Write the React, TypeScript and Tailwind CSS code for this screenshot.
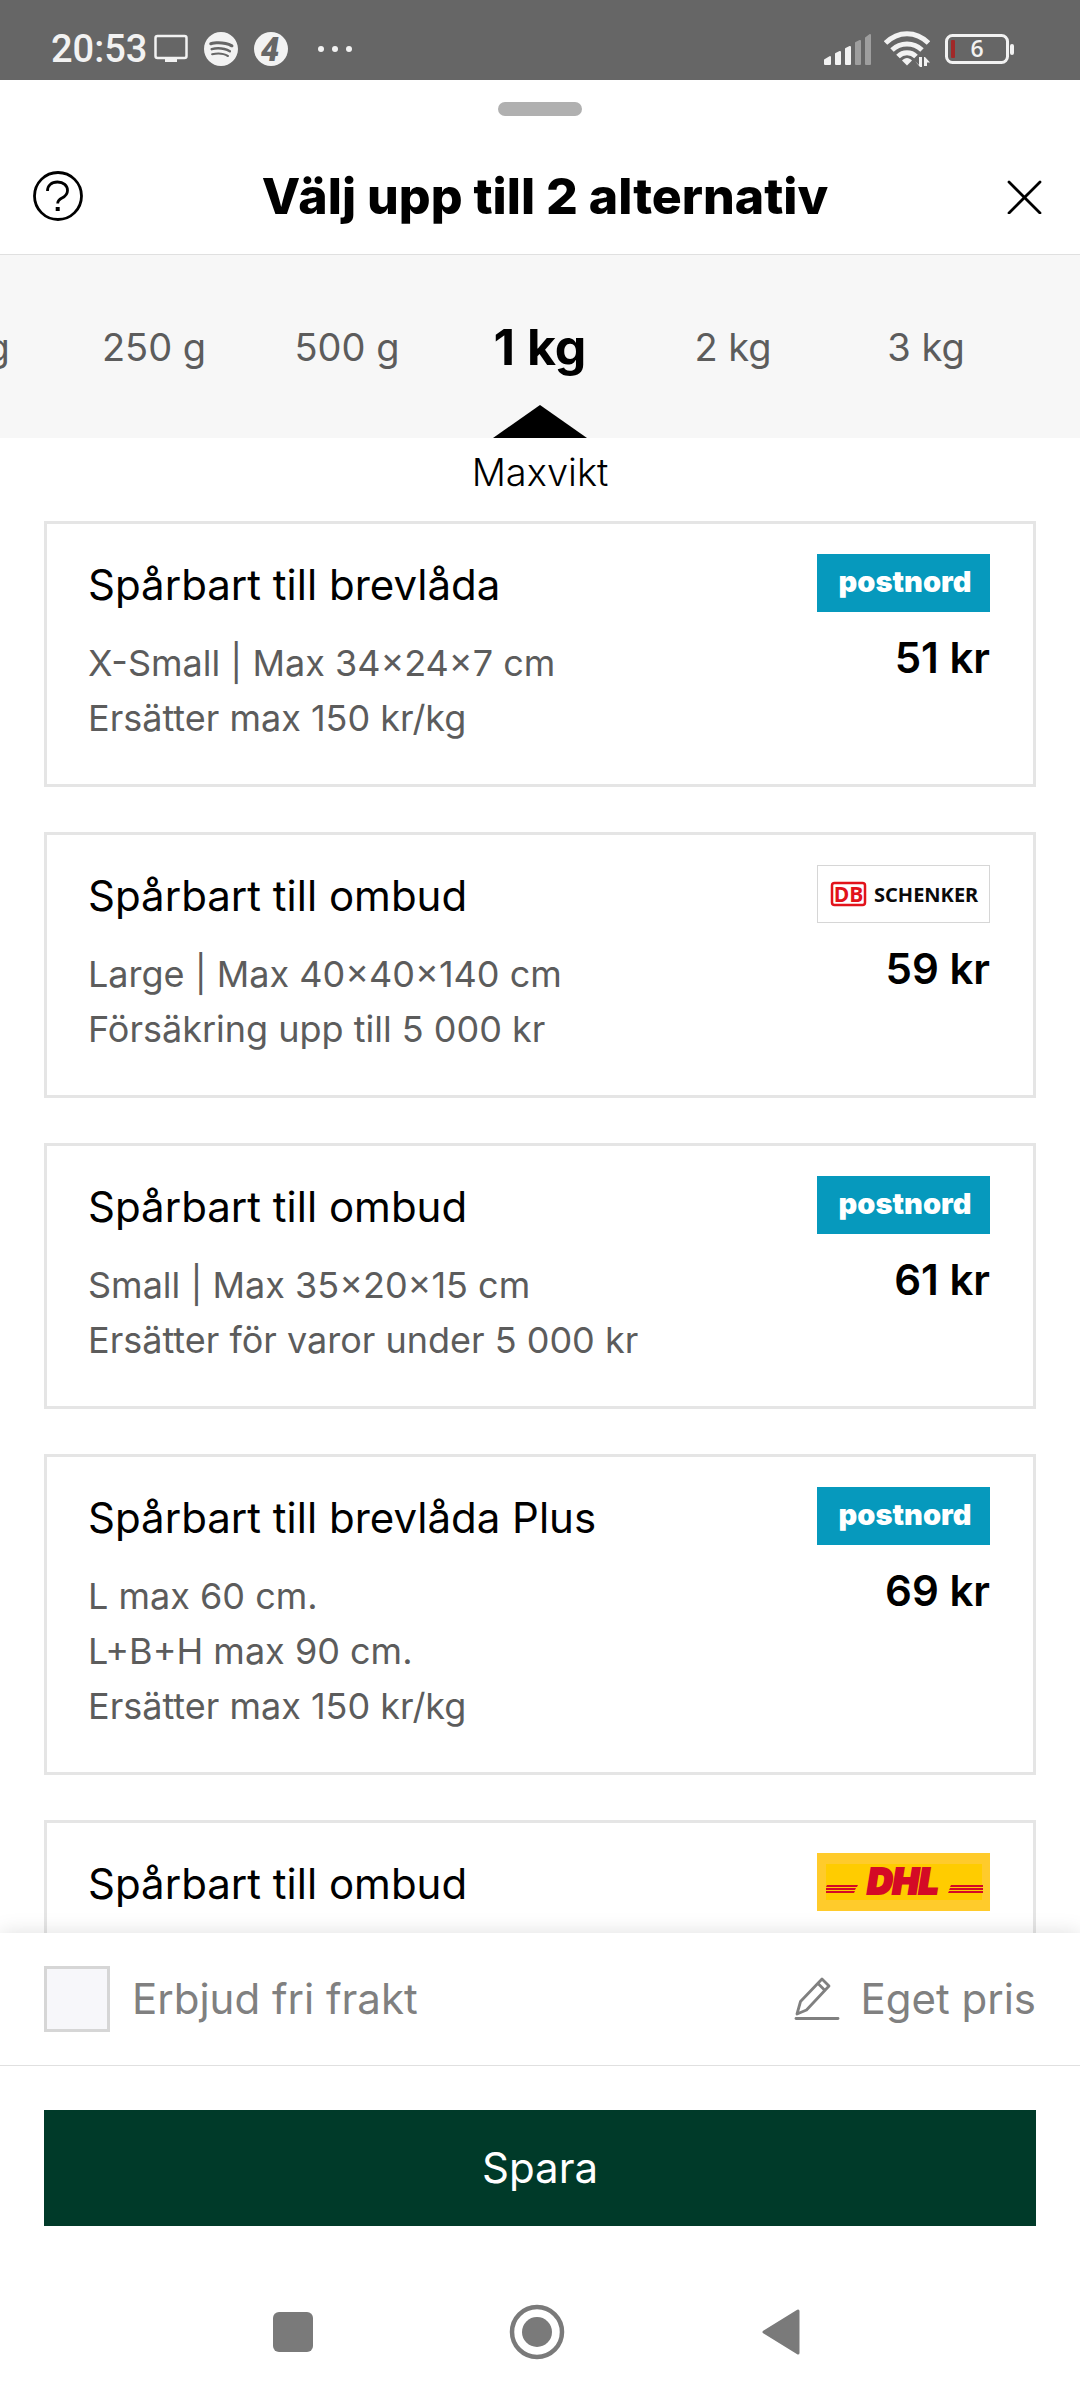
import React, { useState } from "react";
import { SiSpotify } from "react-icons/si";

type Carrier = "postnord" | "schenker" | "dhl";

interface ShippingOption {
  title: string;
  details?: string[];
  carrier: Carrier;
  price?: string;
}

const weights = ["100 g", "250 g", "500 g", "1 kg", "2 kg", "3 kg"];

const options: ShippingOption[] = [
  {
    title: "Spårbart till brevlåda",
    details: ["X-Small | Max 34×24×7 cm", "Ersätter max 150 kr/kg"],
    carrier: "postnord",
    price: "51 kr",
  },
  {
    title: "Spårbart till ombud",
    details: ["Large | Max 40×40×140 cm", "Försäkring upp till 5 000 kr"],
    carrier: "schenker",
    price: "59 kr",
  },
  {
    title: "Spårbart till ombud",
    details: ["Small | Max 35×20×15 cm", "Ersätter för varor under 5 000 kr"],
    carrier: "postnord",
    price: "61 kr",
  },
  {
    title: "Spårbart till brevlåda Plus",
    details: ["L max 60 cm.", "L+B+H max 90 cm.", "Ersätter max 150 kr/kg"],
    carrier: "postnord",
    price: "69 kr",
  },
  {
    title: "Spårbart till ombud",
    carrier: "dhl",
  },
];

const StatusBar: React.FC = () => (
  <div className="flex h-20 shrink-0 items-center justify-between bg-[#666666] pt-[18px] pr-[65px] pl-[51px] text-[#f2f2f2]">
    <div className="flex items-center">
      <span className="font-[Roboto,sans-serif] text-[38px] leading-none font-medium">
        20:53
      </span>
      <svg width="34" height="34" viewBox="0 0 34 34" className="ml-[7px]">
        <rect x="1.5" y="4" width="31" height="22" rx="2" fill="none" stroke="currentColor" strokeWidth="2.5" />
        <path d="M11 26h12v4H11z" fill="currentColor" />
      </svg>
      <SiSpotify size={34} className="ml-4" />
      <svg width="34" height="34" viewBox="0 0 34 34" className="ml-4">
        <circle cx="17" cy="17" r="17" fill="currentColor" />
        <text x="16" y="29" textAnchor="middle" fontFamily="Roboto, sans-serif" fontWeight="900" fontStyle="italic" fontSize="33" fill="#666666">
          4
        </text>
      </svg>
      <svg width="34" height="34" viewBox="0 0 34 34" className="ml-[30px]" fill="currentColor">
        <circle cx="3" cy="17" r="3" />
        <circle cx="17" cy="17" r="3" />
        <circle cx="31" cy="17" r="3" />
      </svg>
    </div>

    <div className="flex items-center">
      <svg width="48" height="34" viewBox="0 0 48 34" fill="currentColor" stroke="currentColor" strokeWidth="2" strokeLinejoin="round">
        <path d="M1 28l5-3v7H1z" />
        <path d="M12 22l4-2v12h-4z" />
        <path d="M22 17l4-2v17h-4z" />
        <path d="M32 11l4-2v23h-4z" opacity="0.4" />
        <path d="M42 6l4-3v29h-4z" opacity="0.4" />
      </svg>
      <svg width="46" height="36" viewBox="0 0 46 36" fill="none" stroke="currentColor" strokeWidth="5" className="ml-3">
        <path d="M1.5 12C14 -0.5 32 -0.5 44.500 12" />
        <path d="M8 19C16.500 11 29.500 11 38 19" />
        <path d="M14 25.500C19 20.500 27 20.500 32 25.500" />
        <path d="M18 29.500c3-3.500 7-3.500 10 0l-5 5z" fill="currentColor" stroke="none" />
        <path d="M31 30l4 4v-8h3v10h-2zM40 26h1l5 5.500h-3V35h-3z" fill="currentColor" stroke="none" />
      </svg>
      <svg width="70" height="32" viewBox="0 0 70 32" className="ml-[15px]">
        <rect x="1.5" y="2.5" width="61" height="27" rx="6" fill="none" stroke="currentColor" strokeWidth="3" />
        <rect x="6" y="7" width="4" height="18" rx="1" fill="#a02828" />
        <rect x="65" y="11" width="4" height="11" rx="2" fill="currentColor" />
        <text x="32" y="24" textAnchor="middle" fontFamily="Open Sans, sans-serif" fontWeight="600" fontSize="23" fill="currentColor">
          6
        </text>
      </svg>
    </div>
  </div>
);

const CarrierLogo: React.FC<{ carrier: Carrier }> = ({ carrier }) => {
  if (carrier === "postnord") {
    return (
      <svg width="173" height="58" viewBox="0 0 173 58" role="img" aria-label="PostNord">
        <rect width="173" height="58" fill="#0699bd" />
        <text x="88" y="38" textAnchor="middle" fontFamily="Inter, sans-serif" fontWeight="900" fontSize="29" fill="#ffffff">
          postnord
        </text>
      </svg>
    );
  }

  if (carrier === "schenker") {
    return (
      <svg width="173" height="58" viewBox="0 0 173 58" role="img" aria-label="DB Schenker">
        <rect x="0.5" y="0.5" width="172" height="57" fill="#ffffff" stroke="#d6d6d6" />
        <rect x="15" y="18" width="33" height="22" rx="2.5" fill="#ffffff" stroke="#e2131b" strokeWidth="2.5" />
        <text x="31.5" y="37" textAnchor="middle" fontFamily="Open Sans, sans-serif" fontWeight="700" fontSize="21" fill="#e2131b">
          DB
        </text>
        <text x="57" y="37" fontFamily="Noto Sans, sans-serif" fontWeight="700" fontSize="20" fill="#0a0a0a">
          SCHENKER
        </text>
      </svg>
    );
  }

  return (
    <svg width="173" height="58" viewBox="0 0 173 58" role="img" aria-label="DHL">
      <rect width="173" height="58" fill="#ffcb2b" />
      <rect x="9" y="11" width="156" height="36" fill="#ffcc00" />
      <path d="M10 32h31l-1 2H9zM9 35h30l-1 2H9zM9 38h29l-1 2H9zM134 32h32v2h-33zM133 35h33v2h-34zM132 38h34v2h-35z" fill="#d40a26" />
      <text x="86" y="41" textAnchor="middle" fontFamily="Inter, sans-serif" fontWeight="900" fontStyle="italic" fontSize="35" fill="#d40a26" stroke="#d40a26" strokeWidth="2">
        DHL
      </text>
    </svg>
  );
};

const App: React.FC = () => {
  const [weight, setWeight] = useState("1 kg");
  const [selected, setSelected] = useState<number[]>([]);

  const toggle = (index: number) => {
    setSelected((prev) =>
      prev.includes(index)
        ? prev.filter((i) => i !== index)
        : [...prev, index].slice(-2)
    );
  };

  return (
    <div className="flex h-screen flex-col overflow-hidden bg-white font-[Inter,sans-serif] text-black">
      <StatusBar />

      {/* Sheet header */}
      <header className="shrink-0 border-b border-[#e0e0e0] pt-[22px]">
        <div className="mx-auto h-[14px] w-[84px] rounded-full bg-[#b0b0b0]" />
        <div className="mt-[22px] flex h-[116px] items-center justify-between pr-[38px] pl-8">
          <button type="button" aria-label="Hjälp">
            <svg width="52" height="52" viewBox="0 0 52 52" fill="none" stroke="currentColor" strokeWidth="2.8">
              <circle cx="26" cy="26" r="23.5" />
              <path d="M15.500 21c0-5.500 4-9 10-9s10 3.500 10 8.500c0 4-2.500 6-5.500 7.500s-4.300 2.500-4.300 5.500" />
              <path d="M25.700 37v4" strokeWidth="4" />
            </svg>
          </button>
          <h1 className="text-[50px] leading-[60px] font-extrabold">
            Välj upp till 2 alternativ
          </h1>
          <button type="button" aria-label="Stäng">
            <svg width="36" height="36" viewBox="0 0 36 36" fill="none" stroke="currentColor" strokeWidth="2.8" strokeLinecap="round">
              <path d="M3 4l31 31M34 4L3 35" />
            </svg>
          </button>
        </div>
      </header>

      {/* Weight picker */}
      <nav className="shrink-0 overflow-hidden bg-[#f7f7f7]" aria-label="Maxvikt">
        <div className="flex justify-center pt-[62px] pb-7">
          {weights.map((item) => (
            <button
              key={item}
              type="button"
              onClick={() => setWeight(item)}
              className={
                item === weight
                  ? "w-[193px] shrink-0 text-[50px] leading-[60px] font-bold"
                  : "w-[193px] shrink-0 text-[38px] leading-[60px] text-[#5c5c5c]"
              }
            >
              {item}
            </button>
          ))}
          <span className="w-[193px] shrink-0" />
        </div>
        <svg width="94" height="33" viewBox="0 0 94 33" className="mx-auto block">
          <path d="M47 0L94 33H0z" />
        </svg>
      </nav>
      <p className="mt-[10px] mb-[25px] shrink-0 text-center text-[38px] leading-[48px] font-light">
        Maxvikt
      </p>

      {/* Options */}
      <main className="flex min-h-0 flex-1 flex-col gap-[45px] overflow-hidden px-11">
        {options.map((option, index) => (
          <button
            key={index}
            type="button"
            aria-pressed={selected.includes(index)}
            onClick={() => toggle(index)}
            className="flex shrink-0 items-start justify-between border-3 border-[#e5e5e5] pt-[30px] pr-[43px] pb-[38px] pl-[41px] text-left aria-pressed:border-[#003a29]"
          >
            <span className="block">
              <span className="block text-[42px] leading-[62px]">
                {option.title}
              </span>
              <span className="mt-5 block text-[36px] leading-[55px] text-[#5c5c5c]">
                {option.details?.map((line) => (
                  <span key={line} className="block">
                    {line}
                  </span>
                ))}
              </span>
            </span>
            <span className="flex flex-col items-end">
              <CarrierLogo carrier={option.carrier} />
              {option.price && (
                <span className="mt-[18px] text-[42px] leading-[56px] font-semibold">
                  {option.price}
                </span>
              )}
            </span>
          </button>
        ))}
      </main>

      {/* Footer actions */}
      <footer className="relative shrink-0 bg-white shadow-[0_0_20px_rgba(0,0,0,0.13)]">
        <div className="flex h-[133px] items-center justify-between border-b border-[#e0e0e0] px-11 text-[42px] leading-[56px] text-[#808080]">
          <label className="flex items-center">
            <input
              type="checkbox"
              className="size-[66px] appearance-none border-3 border-[#d6d6d6] bg-[#f7f7fa] checked:bg-[#003a29]"
            />
            <span className="ml-[22px]">Erbjud fri frakt</span>
          </label>
          <button type="button" className="flex items-center">
            <svg width="46" height="44" viewBox="0 0 46 44" fill="none" stroke="currentColor" strokeWidth="2.8" strokeLinejoin="round" strokeLinecap="round">
              <path d="M3 37l3.500-12.500L28 2l7 7-22.500 24L3 37zM24 6.500l7 7" />
              <path d="M2 41.500h42" />
            </svg>
            <span className="ml-5">Eget pris</span>
          </button>
        </div>
        <div className="px-11 pt-11">
          <button type="button" className="h-[116px] w-full bg-[#003a29] text-[42px] leading-[56px] text-white">
            Spara
          </button>
        </div>

        {/* System navigation */}
        <div className="flex h-[174px] items-center justify-center pt-[38px] pr-[6px] text-[#7a7a7a]">
          <button type="button" aria-label="Senaste" className="flex w-[244px] justify-center">
            <span className="size-10 rounded-md bg-current" />
          </button>
          <button type="button" aria-label="Hem" className="flex w-[244px] justify-center">
            <svg width="56" height="56" viewBox="0 0 56 56">
              <circle cx="28" cy="28" r="25" fill="none" stroke="currentColor" strokeWidth="4.5" />
              <circle cx="28" cy="28" r="15" fill="currentColor" />
            </svg>
          </button>
          <button type="button" aria-label="Tillbaka" className="flex w-[244px] justify-center">
            <svg width="38" height="46" viewBox="0 0 38 46" fill="currentColor" stroke="currentColor" strokeWidth="3" strokeLinejoin="round">
              <path d="M2 23L36 2v42z" />
            </svg>
          </button>
        </div>
      </footer>
    </div>
  );
};

export default App;
